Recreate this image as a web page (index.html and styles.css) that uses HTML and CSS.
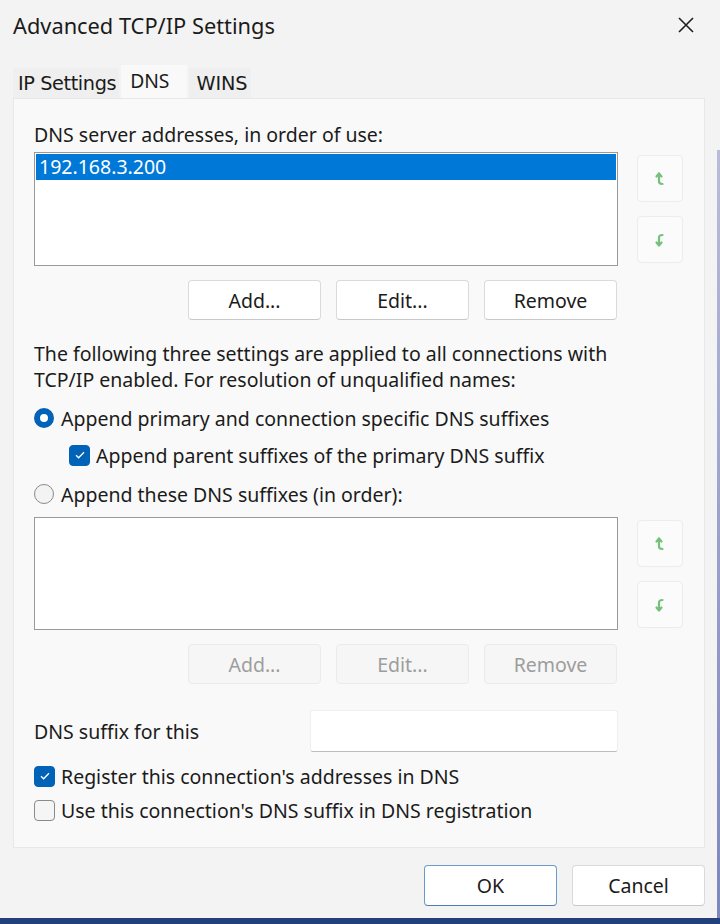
FILE: index.html
```html
<!DOCTYPE html>
<html>
<head>
<meta charset="utf-8">
<link rel="stylesheet" href="styles.css">
</head>
<body>
<div class="window">
  <div class="titlebar">
    <span class="title">Advanced TCP/IP Settings</span>
    <svg class="close" width="18" height="18" viewBox="0 0 18 18"><path d="M2 2L16 16M16 2L2 16" stroke="#1f1f1f" stroke-width="1.6" fill="none"/></svg>
  </div>
  <div class="tabs">
    <div class="tab first">IP Settings</div>
    <div class="tab active">DNS</div>
    <div class="tab last">WINS</div>
  </div>
  <div class="panel">
    <div class="label">DNS server addresses, in order of use:</div>
    <div class="listrow">
      <div class="listbox">
        <div class="item selected">192.168.3.200</div>
      </div>
      <div class="arrows">
        <div class="arrowbtn"><svg width="10" height="14" viewBox="0 0 10 14"><path d="M4 1.5L1.5 4.5M4 1.5L6.5 4.5M4 2V9.5Q4 12 7.5 12" stroke="#74c27a" stroke-width="2.2" fill="none" stroke-linecap="round"/></svg></div>
        <div class="arrowbtn"><svg width="10" height="14" viewBox="0 0 10 14"><path d="M4 12.5L1.5 9.5M4 12.5L6.5 9.5M4 12V4.5Q4 2 7.5 2" stroke="#74c27a" stroke-width="2.2" fill="none" stroke-linecap="round"/></svg></div>
      </div>
    </div>
    <div class="btnrow">
      <div class="btn">Add...</div>
      <div class="btn">Edit...</div>
      <div class="btn">Remove</div>
    </div>
    <p class="para">The following three settings are applied to all connections with<br>TCP/IP enabled. For resolution of unqualified names:</p>
    <div class="opt radio-row first">
      <span class="radio on"></span>
      <span>Append primary and connection specific DNS suffixes</span>
    </div>
    <div class="opt sub">
      <span class="check on"><svg width="12" height="10" viewBox="0 0 12 10"><path d="M2 5.2L4.6 7.8L10 2.2" stroke="#fff" stroke-width="1.3" fill="none"/></svg></span>
      <span>Append parent suffixes of the primary DNS suffix</span>
    </div>
    <div class="opt radio-row second">
      <span class="radio"></span>
      <span>Append these DNS suffixes (in order):</span>
    </div>
    <div class="listrow list2">
      <div class="listbox"></div>
      <div class="arrows">
        <div class="arrowbtn"><svg width="10" height="14" viewBox="0 0 10 14"><path d="M4 1.5L1.5 4.5M4 1.5L6.5 4.5M4 2V9.5Q4 12 7.5 12" stroke="#74c27a" stroke-width="2.2" fill="none" stroke-linecap="round"/></svg></div>
        <div class="arrowbtn"><svg width="10" height="14" viewBox="0 0 10 14"><path d="M4 12.5L1.5 9.5M4 12.5L6.5 9.5M4 12V4.5Q4 2 7.5 2" stroke="#74c27a" stroke-width="2.2" fill="none" stroke-linecap="round"/></svg></div>
      </div>
    </div>
    <div class="btnrow">
      <div class="btn disabled">Add...</div>
      <div class="btn disabled">Edit...</div>
      <div class="btn disabled">Remove</div>
    </div>
    <div class="suffixrow">
      <span class="suffixlabel">DNS suffix for this</span>
      <div class="textbox"></div>
    </div>
    <div class="opt reg">
      <span class="check on"><svg width="12" height="10" viewBox="0 0 12 10"><path d="M2 5.2L4.6 7.8L10 2.2" stroke="#fff" stroke-width="1.3" fill="none"/></svg></span>
      <span>Register this connection's addresses in DNS</span>
    </div>
    <div class="opt use">
      <span class="check"></span>
      <span>Use this connection's DNS suffix in DNS registration</span>
    </div>
  </div>
  <div class="footer">
    <div class="btn big default">OK</div>
    <div class="btn big">Cancel</div>
  </div>
  <div class="edge-right"></div>
  <div class="edge-bottom"></div>
</div>
</body>
</html>
```

FILE: styles.css
```css
* { box-sizing: border-box; }
html, body { margin: 0; padding: 0; }
body {
  width: 720px;
  height: 924px;
  background: #f3f3f3;
  font-family: "Noto Sans", "Open Sans", sans-serif;
  font-size: 19.5px;
  color: #1b1b1b;
  overflow: hidden;
}
.window {
  position: relative;
  width: 720px;
  height: 924px;
  display: flex;
  flex-direction: column;
}
.titlebar {
  height: 50px;
  display: flex;
  align-items: center;
  justify-content: space-between;
  padding: 0 25px 0 13px;
}
.title {
  font-size: 21.8px;
  color: #1b1b1b;
}
.tabs {
  display: flex;
  margin: 15px 0 0 13px;
  height: 33px;
  align-items: flex-end;
  gap: 2px;
}
.tab {
  height: 30px;
  padding: 0 3px 0 5px;
  display: flex;
  align-items: center;
  font-family: "DejaVu Sans", sans-serif;
  font-size: 19.3px;
  background: #efefef;
  color: #1b1b1b;
  letter-spacing: -0.4px;
}
.tab.last { padding: 0 4px 0 7px; letter-spacing: -0.1px; }
.tab.active {
  height: 33px;
  background: #f9f9f9;
  padding: 2px 18px 0 9px;
  align-items: flex-start;
  font-family: "Noto Sans", sans-serif;
  letter-spacing: 0;
}
.panel {
  margin: 0 15px 0 13px;
  height: 750px;
  background: #f9f9f9;
  border: 1px solid #e8e8e8;
  padding: 23px 0 0 20px;
}
.label {
  line-height: 26px;
  height: 26px;
}
.listrow {
  display: flex;
  margin-top: 4px;
  gap: 19px;
}
.listbox {
  width: 584px;
  height: 114px;
  background: #fff;
  border: 1px solid #9a9a9a;
  padding: 1px;
}
.item {
  height: 26px;
  line-height: 26px;
  padding-left: 3px;
}
.item.selected {
  background: #0078d7;
  color: #fff;
}
.arrows {
  display: flex;
  flex-direction: column;
  gap: 14px;
  padding-top: 3px;
}
.arrowbtn {
  width: 46px;
  height: 47px;
  border: 1px solid #ececec;
  border-radius: 4px;
  background: #fbfbfb;
  display: flex;
  align-items: center;
  justify-content: center;
}
.btnrow {
  display: flex;
  gap: 15px;
  margin-top: 14px;
  padding-left: 154px;
}
.btn {
  width: 133px;
  height: 40px;
  border: 1px solid #dadada;
  border-bottom-color: #c8c8c8;
  border-radius: 4px;
  background: #fff;
  display: flex;
  align-items: center;
  justify-content: center;
  color: #1b1b1b;
}
.btn.disabled {
  background: #f6f6f6;
  border-color: #ebebeb;
  color: #9d9d9d;
}
.para {
  margin: 21px 0 0 0;
  line-height: 26px;
}
.opt {
  display: flex;
  align-items: center;
  gap: 7px;
  height: 26px;
}
.radio-row.first { margin-top: 12px; }
.opt.sub { margin-top: 11px; padding-left: 35px; gap: 6px; }
.radio-row.second { margin-top: 13px; }
.radio {
  width: 20px;
  height: 20px;
  border-radius: 50%;
  border: 1px solid #8a8a8a;
  background: #f3f3f3;
  flex: none;
}
.radio.on {
  border: 6px solid #0063b8;
  background: #fff;
}
.check {
  width: 21px;
  height: 21px;
  border-radius: 4px;
  border: 1px solid #8a8a8a;
  background: #f5f5f5;
  display: flex;
  align-items: center;
  justify-content: center;
  flex: none;
}
.check.on {
  background: #0063b8;
  border-color: #0063b8;
}
.list2 { margin-top: 10px; }
.list2 .listbox { height: 113px; }
.suffixrow {
  display: flex;
  align-items: center;
  margin-top: 26px;
  height: 42px;
}
.suffixlabel { width: 276px; }
.textbox {
  width: 308px;
  height: 42px;
  background: #fff;
  border: 1px solid #efefef;
  border-bottom: 1px solid #bdbdbd;
  border-radius: 3px;
}
.opt.reg { margin-top: 11px; gap: 6px; }
.opt.use { margin-top: 8px; gap: 6px; }
.footer {
  display: flex;
  justify-content: flex-end;
  gap: 15px;
  padding: 17px 15px 0 0;
}
.btn.big {
  height: 41px;
}
.btn.default {
  border: 1px solid #6b9bcc;
  border-bottom-color: #4a7db3;
}
.edge-right {
  position: absolute;
  right: 0;
  top: 150px;
  bottom: 0;
  width: 3px;
  background: linear-gradient(#b9bbd8, #7d86bd);
}
.edge-bottom {
  position: absolute;
  left: 0;
  right: 0;
  bottom: 0;
  height: 6px;
  background: #23407a;
}
```
